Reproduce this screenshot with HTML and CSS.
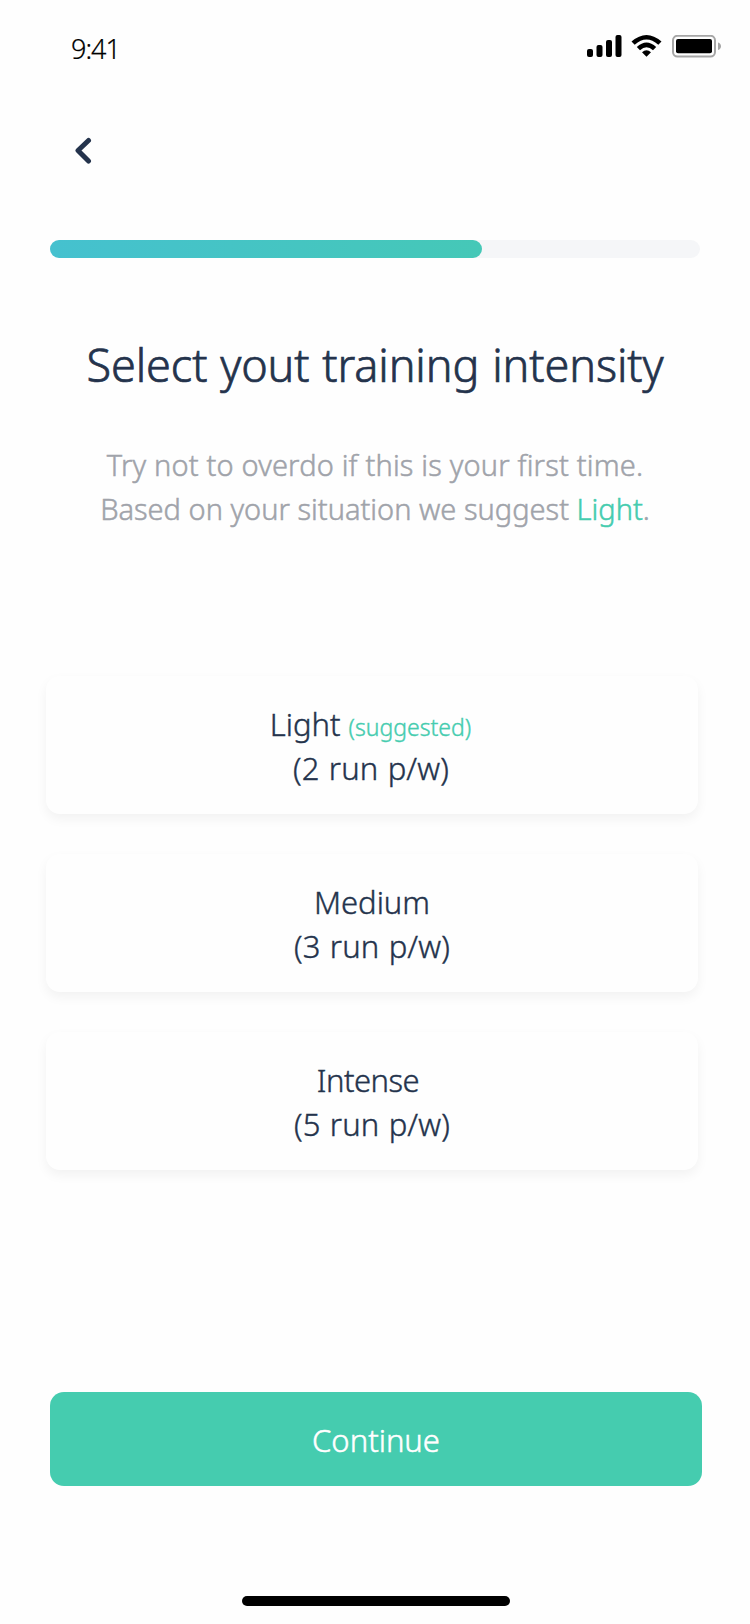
FILE: index.html
```html
<!DOCTYPE html>
<html lang="en">
<head>
<meta charset="utf-8">
<title>Training intensity</title>
<link rel="stylesheet" href="styles.css">
</head>
<body>
<main class="screen">
  <header class="status">
    <span class="time">9:41</span>
    <svg class="indicators" width="136" height="24" viewBox="0 0 136 24">
      <g><rect x="0" y="14" width="6" height="8" rx="2"/><rect x="9.5" y="10" width="6" height="12" rx="2"/><rect x="19" y="5" width="6" height="17" rx="2"/><rect x="28.500" y="0" width="6" height="22" rx="2"/></g>
      <path d="M44.500 6.600Q59.500-6.600 74.500 6.600L71.300 9.700Q59.500-.8 47.700 9.700ZM49.800 12Q59.500 3 69.200 12L66 15.200Q59.500 9.400 53 15.200ZM55 17.300Q59.500 13.300 64 17.300L59.500 21.700Z"/>
      <rect x="86" y=".8" width="42" height="20.700" rx="4.500" fill="none" stroke="#a6a6a6" stroke-width="2"/>
      <rect x="89" y="4" width="36" height="14.300" rx="2"/>
      <path fill="#a6a6a6" d="M131 7.500Q134 8.500 134 11.200T131 15Z"/>
    </svg>
  </header>
  <nav class="nav">
    <svg width="18" height="28" viewBox="0 0 18 28"><path d="M14.500 3.500L4 13.500L14.500 24" fill="none" stroke="#24334c" stroke-width="5" stroke-linecap="round" stroke-linejoin="round"/></svg>
  </nav>
  <div class="progress"><div class="progress-fill"></div></div>
  <h1 class="title">Select yout training intensity</h1>
  <p class="hint"><span class="hint-lead">Try not to overdo if this is your first time.</span><br>Based on your situation we suggest <b class="accent">Light</b>.</p>
  <section class="options">
    <div class="card"><div class="name-light">Light <small class="accent">(suggested)</small></div><div class="rate rate-light">(2 run p/w)</div></div>
    <div class="card"><div>Medium</div><div class="rate">(3 run p/w)</div></div>
    <div class="card"><div class="name-intense">Intense</div><div class="rate">(5 run p/w)</div></div>
  </section>
  <button class="continue">Continue</button>
  <div class="home"></div>
</main>
</body>
</html>
```
FILE: styles.css
```css
* { box-sizing: border-box; }
body { margin: 0; background: #fefefe; font-family: "Noto Sans", "Open Sans", sans-serif; font-weight: 300; color: #24334c; -webkit-text-stroke: .4px currentColor; }
.screen { width: 750px; height: 1624px; display: flex; flex-direction: column; overflow: hidden; }
.status { height: 137px; display: flex; justify-content: space-between; padding: 30px 27px 0 71px; }
.time { font-size: 27px; line-height: 38px; letter-spacing: -1px; color: #000; -webkit-text-stroke-width: .2px; }
.indicators { margin-top: 5px; }
.nav { height: 103px; padding-left: 74px; }
.nav svg, .indicators { display: block; }
.progress { height: 18px; flex: none; margin: 0 50px; border-radius: 9px; background: #f5f6f8; }
.progress-fill { width: 432px; height: 18px; border-radius: 9px; background: linear-gradient(90deg, #45c1cf, #45c8b7); }
.title { margin: 75px 0 0; height: 64px; line-height: 64px; font-size: 45px; font-weight: inherit; text-align: center; letter-spacing: -.1px; word-spacing: 1.200px; -webkit-text-stroke-width: .7px; }
.hint { margin: 46px 0 0; height: 88px; line-height: 44px; font-size: 29px; color: #a0a3aa; text-align: center; -webkit-text-stroke-width: .5px; }
.hint-lead { letter-spacing: .17px; }
.accent { color: #45ccaf; font-weight: inherit; -webkit-text-stroke-color: #45ccaf; }
.options { display: flex; flex-direction: column; gap: 40px; margin: 145px 52px 0 46px; }
.card { height: 138px; border-radius: 14px; padding-top: 26px; background: #fefefe; box-shadow: 0 5px 12px rgba(0, 0, 0, .05); text-align: center; font-size: 31px; line-height: 44px; }
.card div { height: 44px; }
.card small { font-size: 23px; }
.rate { letter-spacing: .15px; word-spacing: 1px; }
.rate-light { padding-right: 2px; }
.name-light { padding-right: 3px; }
.name-intense { padding-right: 8px; letter-spacing: -.5px; }
.continue { flex: none; height: 94px; margin: 222px 48px 0 50px; padding: 2px 0 0; border: 0; border-radius: 14px; background: #45ccaf; color: #fff; font: 300 31px "Noto Sans", "Open Sans", sans-serif; -webkit-text-stroke: .5px #fff; }
.home { flex: none; width: 268px; height: 10px; margin: 110px 0 0 242px; border-radius: 5px; background: #000; }
```
